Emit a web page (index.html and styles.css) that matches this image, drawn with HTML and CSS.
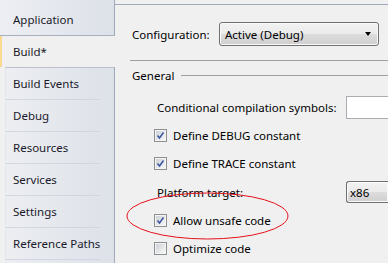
FILE: index.html
```html
<!DOCTYPE html>
<html lang="en">

<head>
    <meta charset="UTF-8">
    <title>Project Properties - Build</title>
    <link rel="stylesheet" href="styles.css">
</head>

<body>
    <div class="page">
        <ul class="tabs">
            <li class="tab first">Application</li>
            <li class="tab selected">Build*</li>
            <li class="tab lower">Build Events</li>
            <li class="tab lower">Debug</li>
            <li class="tab lower">Resources</li>
            <li class="tab lower">Services</li>
            <li class="tab lower">Settings</li>
            <li class="tab lower">Reference Paths</li>
            <li class="tab lower last"></li>
        </ul>

        <div class="panel">
            <div class="config-row">
                <span class="config-label">Configuration:</span>
                <div class="combo config-combo">
                    <span>Active (Debug)</span>
                    <span class="arrow"></span>
                </div>
            </div>

            <div class="rule"></div>

            <div class="group-title">
                <span>General</span>
                <span class="group-line"></span>
            </div>

            <div class="field-row cond-row">
                <span class="field-label">Conditional compilation symbols:</span>
                <div class="textbox"></div>
            </div>

            <label class="check-row">
                <svg class="checkbox" width="13" height="13" viewBox="0 0 13 13">
                    <defs>
                        <linearGradient id="boxfill" x1="0" y1="0" x2="1" y2="1">
                            <stop offset="0" stop-color="#cdd1d7"/>
                            <stop offset="1" stop-color="#f7f7f7"/>
                        </linearGradient>
                    </defs>
                    <rect x="0.5" y="0.5" width="12" height="12" fill="#f4f4f4" stroke="#8e8f8f"/>
                    <rect x="2" y="2" width="9" height="9" fill="url(#boxfill)"/>
                    <path d="M3.5 6.5 L5.5 9 L9.5 3.5" fill="none" stroke="#3a54a0" stroke-width="1.5"/>
                </svg>
                <span>Define DEBUG constant</span>
            </label>

            <label class="check-row">
                <svg class="checkbox" width="13" height="13" viewBox="0 0 13 13">
                    <rect x="0.5" y="0.5" width="12" height="12" fill="#f4f4f4" stroke="#8e8f8f"/>
                    <rect x="2" y="2" width="9" height="9" fill="url(#boxfill)"/>
                    <path d="M3.5 6.5 L5.5 9 L9.5 3.5" fill="none" stroke="#3a54a0" stroke-width="1.5"/>
                </svg>
                <span>Define TRACE constant</span>
            </label>

            <div class="field-row platform-row">
                <span class="field-label">Platform target:</span>
                <div class="combo platform-combo">
                    <span>x86</span>
                </div>
            </div>

            <label class="check-row">
                <svg class="checkbox" width="13" height="13" viewBox="0 0 13 13">
                    <rect x="0.5" y="0.5" width="12" height="12" fill="#f4f4f4" stroke="#8e8f8f"/>
                    <rect x="2" y="2" width="9" height="9" fill="url(#boxfill)"/>
                    <path d="M3.5 6.5 L5.5 9 L9.5 3.5" fill="none" stroke="#3a54a0" stroke-width="1.5"/>
                </svg>
                <span>Allow unsafe code</span>
            </label>

            <label class="check-row">
                <svg class="checkbox" width="13" height="13" viewBox="0 0 13 13">
                    <rect x="0.5" y="0.5" width="12" height="12" fill="#f4f4f4" stroke="#8e8f8f"/>
                    <rect x="2" y="2" width="9" height="9" fill="url(#boxfill)"/>
                </svg>
                <span>Optimize code</span>
            </label>
        </div>
    </div>

    <!-- red ellipse drawn over the screenshot -->
    <svg class="highlight" width="388" height="263" viewBox="0 0 388 263">
        <ellipse cx="207.5" cy="216" rx="80.5" ry="23" fill="none" stroke="#e8101a" stroke-width="1"/>
    </svg>
</body>

</html>
```

FILE: styles.css
```css
body {
    margin: 0;
    width: 388px;
    height: 263px;
    overflow: hidden;
    background-color: #f0f0f0;
    font-family: "Noto Sans", "Open Sans", sans-serif;
    font-size: 11.5px;
    color: #000;
    position: relative;
}

.page {
    display: flex;
    height: 263px;
}

/* left tab strip */
.tabs {
    list-style-type: none;
    margin: 0;
    padding: 0;
    width: 115px;
    display: flex;
    flex-direction: column;
}

.tab {
    box-sizing: border-box;
    height: 32px;
    padding-left: 13px;
    display: flex;
    align-items: center;
    color: #1a1a2a;
    border-right: 1px solid #9eaabb;
}

.tab.first {
    height: 36px;
    padding-top: 3px;
    background: linear-gradient(to right, #eceef3, #dde1e8);
    border-bottom: 1px solid #a7b0bd;
}

.tab.selected {
    height: 31px;
    border-right: none;
    border-left: 2px solid #f8d98e;
    padding-left: 11px;
    background-color: #f0f0f0;
}

.tab.lower {
    margin-left: 5px;
    padding-left: 7px;
    padding-bottom: 1px;
    border-left: 1px solid #e3e6ea;
    background: linear-gradient(to right, #eceef2, #dde1e8);
    position: relative;
}

.tab.lower::after {
    content: "";
    position: absolute;
    left: 0;
    right: 14px;
    bottom: 0;
    height: 1px;
    background-color: #d2d6de;
}

.tab.lower:nth-child(3) {
    border-top: 1px solid #b9c0cb;
    height: 33px;
}

.tab.last {
    flex: 1;
}

.tab.last::after {
    display: none;
}

/* right panel */
.panel {
    flex: 1;
    margin-top: 4px;
    border-top: 1px solid #9eaabb;
    padding-left: 15px;
}

.config-row {
    display: flex;
    align-items: center;
    margin-top: 17px;
    height: 24px;
}

.config-label {
    width: 87px;
    padding-left: 2px;
}

.combo {
    box-sizing: border-box;
    height: 24px;
    border: 1px solid #707070;
    border-radius: 3px;
    background: linear-gradient(to bottom, #f2f2f2 0%, #ebebeb 50%, #dddddd 50%, #cfcfcf 100%);
    display: flex;
    align-items: center;
    padding-left: 5px;
    box-shadow: inset 0 0 0 1px #fbfbfb;
}

.config-combo {
    width: 160px;
    justify-content: space-between;
    padding-right: 7px;
}

.arrow {
    width: 0;
    height: 0;
    border-left: 3.5px solid transparent;
    border-right: 3.5px solid transparent;
    border-top: 4px solid #000;
}

.rule {
    margin-top: 14px;
    height: 1px;
    background-color: #a0a0a0;
}

.group-title {
    display: flex;
    align-items: center;
    height: 16px;
    margin-top: 6px;
    padding-left: 2px;
}

.group-line {
    flex: 1;
    height: 1px;
    margin-left: 7px;
    background-color: #a0a0a0;
}

.field-row {
    display: flex;
    align-items: center;
    padding-left: 27px;
}

.field-label {
    width: 189px;
}

.cond-row {
    margin-top: 13px;
    height: 23px;
}

.textbox {
    flex: 1;
    height: 23px;
    box-sizing: border-box;
    background-color: #fff;
    border: 1px solid #abadb3;
    border-right: none;
}

.check-row {
    display: flex;
    align-items: center;
    height: 28px;
    padding-left: 24px;
}

.checkbox {
    margin-right: 6px;
}

.cond-row + .check-row {
    margin-top: 2px;
}

.platform-row {
    margin-top: 4px;
    height: 22px;
}

.platform-combo {
    flex: 1;
    height: 22px;
    border-right: none;
    border-radius: 3px 0 0 3px;
    padding-left: 3px;
}

.platform-row + .check-row {
    margin-top: 3px;
}

.highlight {
    position: absolute;
    left: 0;
    top: 0;
    pointer-events: none;
}
```
